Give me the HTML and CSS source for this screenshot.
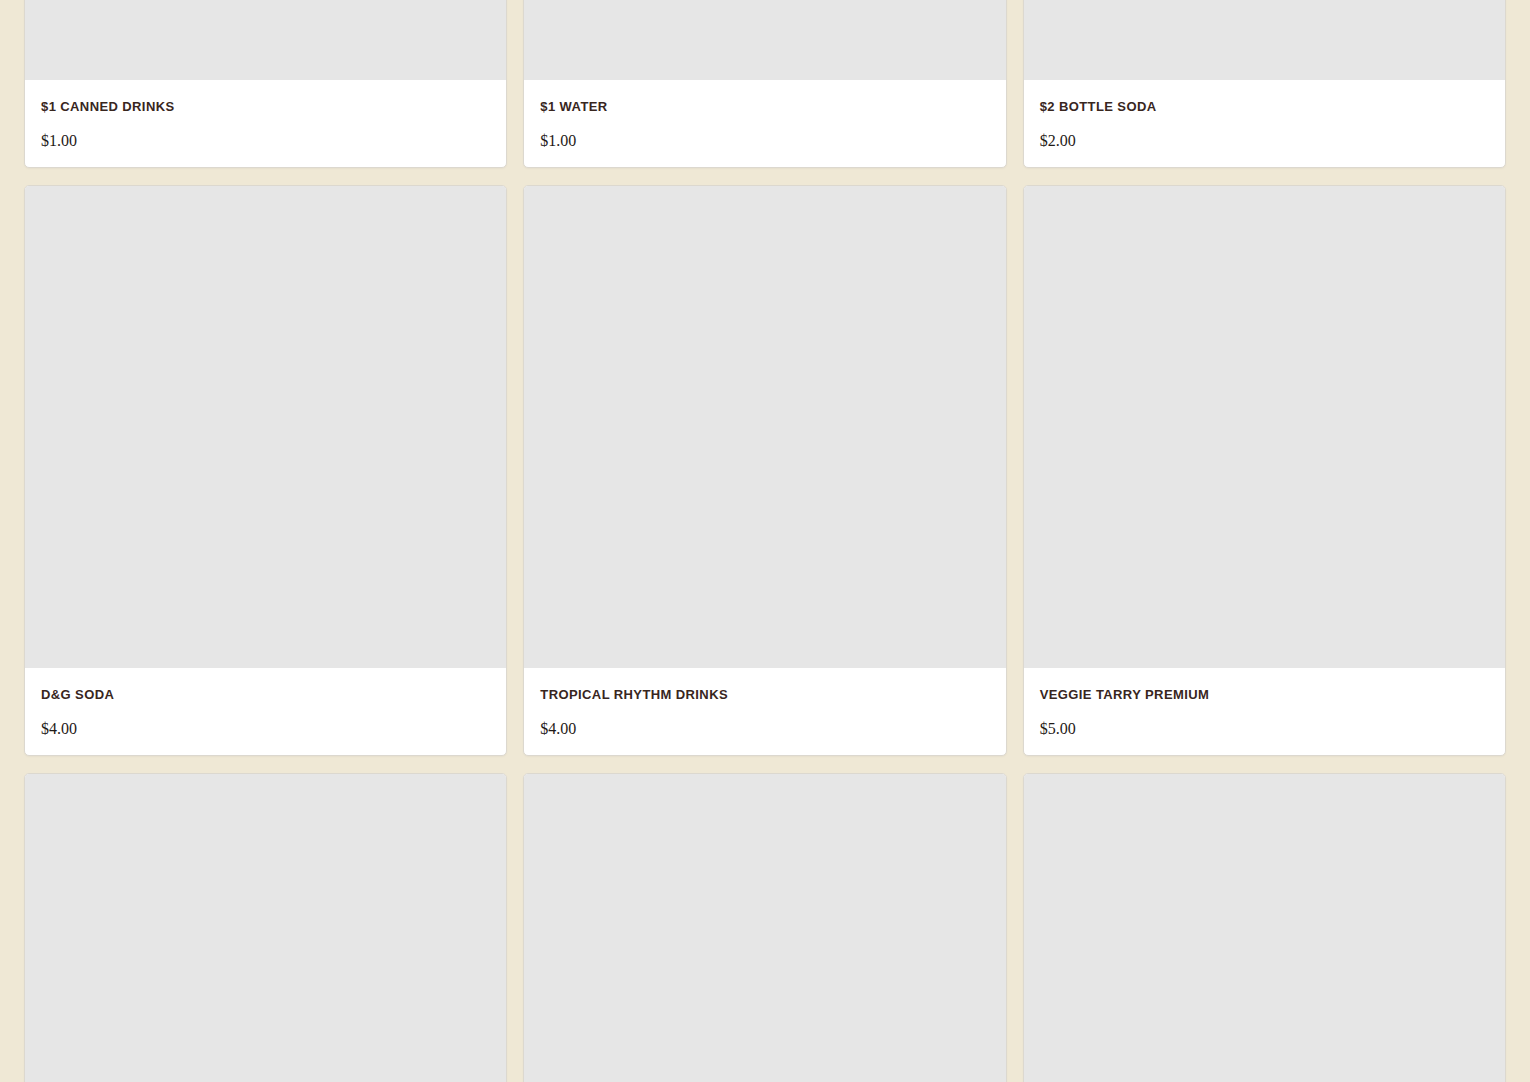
FILE: index.html
```html
<!DOCTYPE html>
<html lang="en">
<head>
    <meta charset="utf-8">
    <title>Drinks</title>
    <link rel="stylesheet" href="styles.css">
</head>
<body>
    <div class="menu-grid">
        <div class="item">
            <div class="item-photo"></div>
            <div class="item-info">
                <h3 class="item-name">$1 Canned Drinks</h3>
                <p class="item-price">$1.00</p>
            </div>
        </div>
        <div class="item">
            <div class="item-photo"></div>
            <div class="item-info">
                <h3 class="item-name">$1 Water</h3>
                <p class="item-price">$1.00</p>
            </div>
        </div>
        <div class="item">
            <div class="item-photo"></div>
            <div class="item-info">
                <h3 class="item-name">$2 Bottle Soda</h3>
                <p class="item-price">$2.00</p>
            </div>
        </div>
        <div class="item">
            <div class="item-photo"></div>
            <div class="item-info">
                <h3 class="item-name">D&amp;G Soda</h3>
                <p class="item-price">$4.00</p>
            </div>
        </div>
        <div class="item">
            <div class="item-photo"></div>
            <div class="item-info">
                <h3 class="item-name">Tropical Rhythm Drinks</h3>
                <p class="item-price">$4.00</p>
            </div>
        </div>
        <div class="item">
            <div class="item-photo"></div>
            <div class="item-info">
                <h3 class="item-name">Veggie Tarry Premium</h3>
                <p class="item-price">$5.00</p>
            </div>
        </div>
        <div class="item">
            <div class="item-photo"></div>
            <div class="item-info">
                <h3 class="item-name">Ginger Beer</h3>
                <p class="item-price">$5.00</p>
            </div>
        </div>
        <div class="item">
            <div class="item-photo"></div>
            <div class="item-info">
                <h3 class="item-name">Sorrel</h3>
                <p class="item-price">$6.00</p>
            </div>
        </div>
        <div class="item">
            <div class="item-photo"></div>
            <div class="item-info">
                <h3 class="item-name">Carrot Juice</h3>
                <p class="item-price">$6.00</p>
            </div>
        </div>
    </div>
    <script>
        // jump down to the drinks rows
        window.scrollTo(0, 426);
    </script>
</body>
</html>
```

FILE: styles.css
```css
html {
    scrollbar-width: none;
}

body {
    margin: 0;
    padding: 24px;
    background-color: #efe8d5;
    font-family: "Liberation Sans", Arial, sans-serif;
}

.menu-grid {
    display: grid;
    grid-template-columns: repeat(3, 1fr);
    gap: 17px 16px;
}

.item {
    background: #fff;
    border: 1px solid #dcd8cf;
    border-radius: 5px;
    overflow: hidden;
    box-shadow: 0 1px 2px rgba(0, 0, 0, 0.04);
}

.item-photo {
    aspect-ratio: 1 / 1;
    background-color: #e6e6e6;
}

.item-info {
    padding: 17px 16px 16px;
}

.item-name {
    margin: 0 0 14px;
    font-size: 13px;
    line-height: 20px;
    font-weight: 700;
    letter-spacing: 0.4px;
    text-transform: uppercase;
    color: #38261e;
}

.item-price {
    margin: 0;
    font-family: "Liberation Serif", "Times New Roman", serif;
    font-size: 16px;
    line-height: 20px;
    color: #1f1a17;
}
```
